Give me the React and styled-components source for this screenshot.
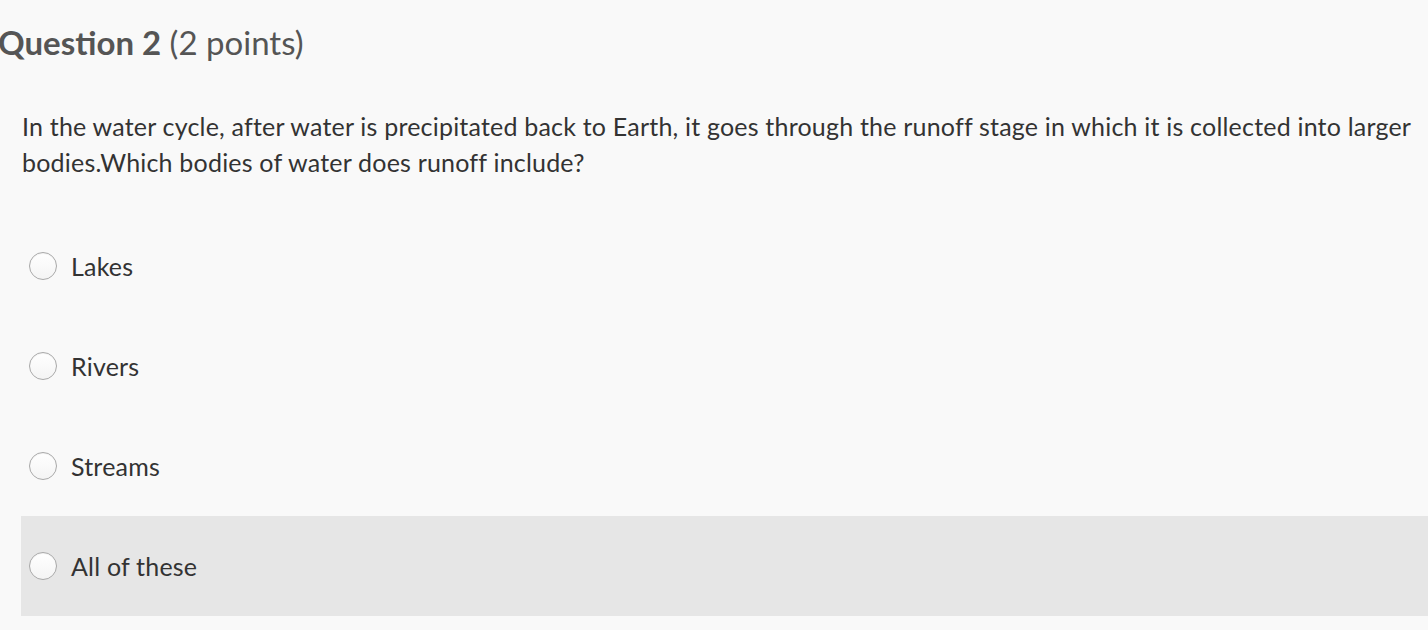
import React from "react";
import styled, { createGlobalStyle } from "styled-components";

const Global = createGlobalStyle`
  html, body { margin: 0; padding: 0; background: #f9f9f9; }
  body { font-family: Lato, "Noto Sans", sans-serif; color: #333; overflow: hidden; }
`;

const Page = styled.div`
  width: 1428px;
  height: 630px;
  background: #f9f9f9;
`;

const Heading = styled.h2`
  margin: 0;
  padding: 20px 0 0 0;
  margin-left: -2px;
  font-size: 33px;
  line-height: 44px;
  font-weight: 400;
  color: #555;
  white-space: nowrap;
`;

const Strong = styled.span`
  font-weight: 700;
`;

const Prompt = styled.p`
  margin: 44px 0 0 22px;
  font-size: 25px;
  letter-spacing: 0.2px;
  line-height: 36px;
  color: #333;
  width: 1400px;
`;

const Options = styled.div`
  margin-top: 36px;
  margin-left: 21px;
  display: flex;
  flex-direction: column;
`;

const Option = styled.label`
  display: flex;
  align-items: center;
  height: 100px;
  padding-left: 8px;
  gap: 14px;
  background: ${(p) => (p.$hover ? "#e6e6e6" : "transparent")};
  font-size: 25px;
  letter-spacing: 0.2px;
  color: #333;
`;

const Radio = styled.span`
  width: 26px;
  height: 26px;
  border-radius: 50%;
  border: 1px solid #a9a9a9;
  background: linear-gradient(#fff, #f4f4f4);
  box-shadow: inset 0 1px 1px rgba(0,0,0,0.05);
  flex: none;
`;

const options = ["Lakes", "Rivers", "Streams", "All of these"];

export default function App() {
  return (
    <Page>
      <Global />
      <Heading>
        <Strong>Question 2</Strong> (2 points)
      </Heading>
      <Prompt>
        In the water cycle, after water is precipitated back to Earth, it goes through the runoff stage in which it is collected into larger bodies.Which bodies of water does runoff include?
      </Prompt>
      <Options>
        {options.map((o, i) => (
          <Option key={o} $hover={i === 3}>
            <Radio />
            {o}
          </Option>
        ))}
      </Options>
    </Page>
  );
}
